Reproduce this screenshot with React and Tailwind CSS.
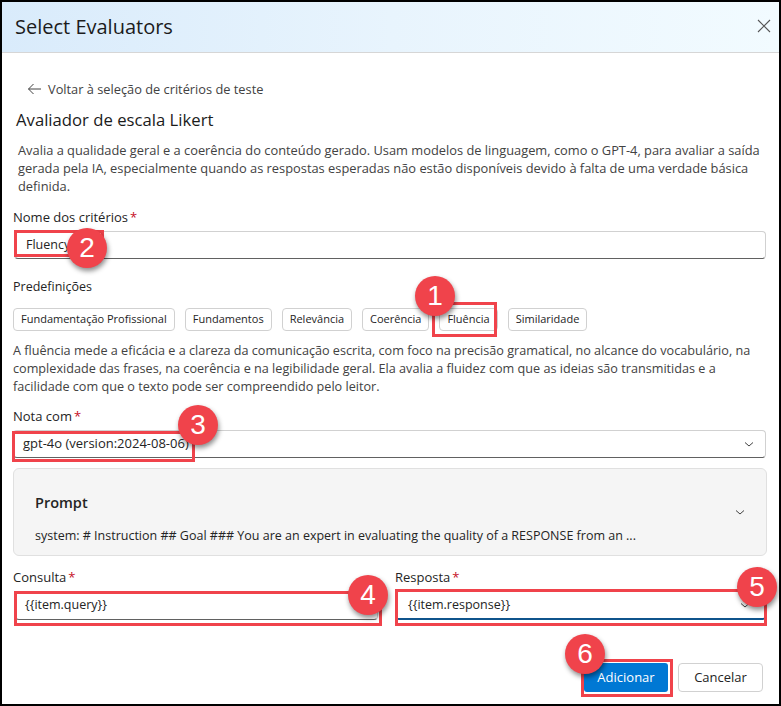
import React from 'react'

function Badge({ n, x, y }) {
  return (
    <div
      className="absolute w-[40px] h-[40px] rounded-full bg-[#f0434b] text-white flex items-center justify-center text-[28px] leading-none shadow-[1px_3px_5px_rgba(0,0,0,0.45)] font-['Liberation_Sans',sans-serif]"
      style={{ left: x - 20, top: y - 20 }}
    >
      {n}
    </div>
  )
}

function Chevron({ className }) {
  return (
    <svg width="12" height="12" viewBox="0 0 12 12" className={className}>
      <path d="M2 4.5 L6 8 L10 4.5" fill="none" stroke="#424242" strokeWidth="1" />
    </svg>
  )
}

function Label({ children }) {
  return (
    <div className="text-[13px] text-[#242424] leading-[18px]">
      {children}
      <span className="text-[#c50f1f] ml-[2px]">*</span>
    </div>
  )
}

const presets = ['Fundamentação Profissional', 'Fundamentos', 'Relevância', 'Coerência', 'Fluência', 'Similaridade']

export default function App() {
  return (
    <div className="relative w-[781px] h-[706px] border-2 border-black bg-white overflow-hidden font-['Open_Sans',sans-serif] text-[#242424]">
      {/* Header */}
      <header className="h-[51px] bg-gradient-to-r from-[#d9ebfb] via-[#e8f4fd] to-[#f2fbff] border-b border-[#d6d6d6] flex items-center justify-between pl-[13px] pr-[6px]">
        <h1 className="text-[20px] text-[#1b1b1b]">Select Evaluators</h1>
        <svg width="14" height="14" viewBox="0 0 14 14" className="mr-[2px] mb-[2px]">
          <path d="M1 1 L13 13 M13 1 L1 13" stroke="#555" strokeWidth="1.1" />
        </svg>
      </header>

      <main className="px-[11px]">
        {/* Back link */}
        <div className="flex items-center gap-[6px] mt-[27px] pl-[14px] text-[12.8px] text-[#424242] leading-[18px]">
          <svg width="15" height="12" viewBox="0 0 15 12">
            <path d="M14 6 H1.5 M6.5 1 L1.5 6 L6.5 11" fill="none" stroke="#424242" strokeWidth="1" />
          </svg>
          <span>Voltar à seleção de critérios de teste</span>
        </div>
        <h2 className="mt-[11px] pl-[3px] text-[16.7px] leading-[22px] text-[#1b1b1b]">Avaliador de escala Likert</h2>

        <p className="mt-[10px] pl-[5px] text-[12.85px] leading-[18px] text-[#424242] whitespace-nowrap">
          Avalia a qualidade geral e a coerência do conteúdo gerado. Usam modelos de linguagem, como o GPT-4, para avaliar a saída<br />
          gerada pela IA, especialmente quando as respostas esperadas não estão disponíveis devido à falta de uma verdade básica<br />
          definida.
        </p>

        {/* Nome */}
        <div className="mt-[13px]">
          <Label>Nome dos critérios</Label>
          <div className="mt-[5px] h-[28px] border border-[#d1d1d1] border-b-[#616161] rounded-[4px] flex items-center px-[11px] text-[12.5px] mr-[2px] ml-[1px]">
            Fluency
          </div>
        </div>

        {/* Predefinições */}
        <div className="mt-[19px] text-[12.5px] leading-[18px]">Predefinições</div>
        <div className="mt-[12px] flex gap-[10px]">
          {presets.map((p) => (
            <div key={p} className="h-[23px] px-[7px] border border-[#d1d1d1] rounded-[4px] flex items-center text-[11px] text-[#242424] whitespace-nowrap">
              {p}
            </div>
          ))}
        </div>
        <p className="mt-[10px] text-[12.65px] leading-[18px] text-[#424242] whitespace-nowrap">
          A fluência mede a eficácia e a clareza da comunicação escrita, com foco na precisão gramatical, no alcance do vocabulário, na<br />
          complexidade das frases, na coerência e na legibilidade geral. Ela avalia a fluidez com que as ideias são transmitidas e a<br />
          facilidade com que o texto pode ser compreendido pelo leitor.
        </p>

        {/* Nota com */}
        <div className="mt-[12px]">
          <Label>Nota com</Label>
          <div className="mt-[5px] h-[28px] border border-[#d1d1d1] border-b-[#616161] rounded-[4px] flex items-center justify-between pl-[9px] pr-[10px] text-[13px] mr-[2px]">
            <span>gpt-4o (version:2024-08-06)</span>
            <Chevron />
          </div>
        </div>

        {/* Prompt */}
        <div className="mt-[10px] h-[88px] bg-[#f5f5f5] border border-[#e0e0e0] rounded-[6px] pl-[21px] pr-[20px] pt-[24px] flex items-start justify-between mr-[1px]">
          <div>
            <div className="text-[14.5px] font-semibold leading-[20px] text-[#242424]">Prompt</div>
            <div className="mt-[14px] text-[12.5px] leading-[18px] text-[#242424]">
              system: # Instruction ## Goal ### You are an expert in evaluating the quality of a RESPONSE from an ...
            </div>
          </div>
          <Chevron className="mt-[13px]" />
        </div>

        {/* Consulta / Resposta */}
        <div className="mt-[12px] flex gap-[17px]">
          <div className="w-[365px]">
            <Label>Consulta</Label>
            <div className="mt-[5px] ml-[2px] h-[29px] border border-[#d1d1d1] border-b-[#616161] rounded-[4px] flex items-center px-[9px] text-[12.5px]">
              {'{{item.query}}'}
            </div>
          </div>
          <div className="flex-1 mr-[2px]">
            <Label>Resposta</Label>
            <div className="mt-[5px] h-[29px] border border-[#d1d1d1] border-b-2 border-b-[#0f548c] rounded-[4px] flex items-center justify-between pl-[12px] pr-[14px] text-[12.5px]">
              <span>{'{{item.response}}'}</span>
              <Chevron />
            </div>
          </div>
        </div>

        {/* Buttons */}
        <div className="mt-[43px] flex justify-end gap-[10px] pr-[5px]">
          <button className="h-[29px] w-[84px] bg-[#0078d4] text-white text-[13px] rounded-[3px]">Adicionar</button>
          <button className="h-[29px] w-[85px] border border-[#d1d1d1] rounded-[4px] text-[13px] text-[#242424] bg-white">Cancelar</button>
        </div>
      </main>

      {/* Highlight boxes */}
      <div className="absolute left-[12px] top-[228px] w-[90px] h-[27px] border-[3px] border-[#f0434b] pointer-events-none" />
      <div className="absolute left-[430px] top-[300px] w-[65px] h-[35px] border-[3px] border-[#f0434b] pointer-events-none" />
      <div className="absolute left-[10px] top-[429px] w-[183px] h-[31px] border-[3px] border-[#f0434b] pointer-events-none" />
      <div className="absolute left-[12px] top-[589px] w-[368px] h-[35px] border-[3px] border-[#f0434b] pointer-events-none" />
      <div className="absolute left-[393px] top-[587px] w-[372px] h-[37px] border-[3px] border-[#f0434b] pointer-events-none" />
      <div className="absolute left-[579px] top-[657px] w-[92px] h-[38px] border-[3px] border-[#f0434b] pointer-events-none" />

      {/* Badges */}
      <Badge n="1" x={433} y={294} />
      <Badge n="2" x={85} y={246} />
      <Badge n="3" x={196} y={423} />
      <Badge n="4" x={366} y={593} />
      <Badge n="5" x={755} y={585} />
      <Badge n="6" x={583} y={652} />
    </div>
  )
}
